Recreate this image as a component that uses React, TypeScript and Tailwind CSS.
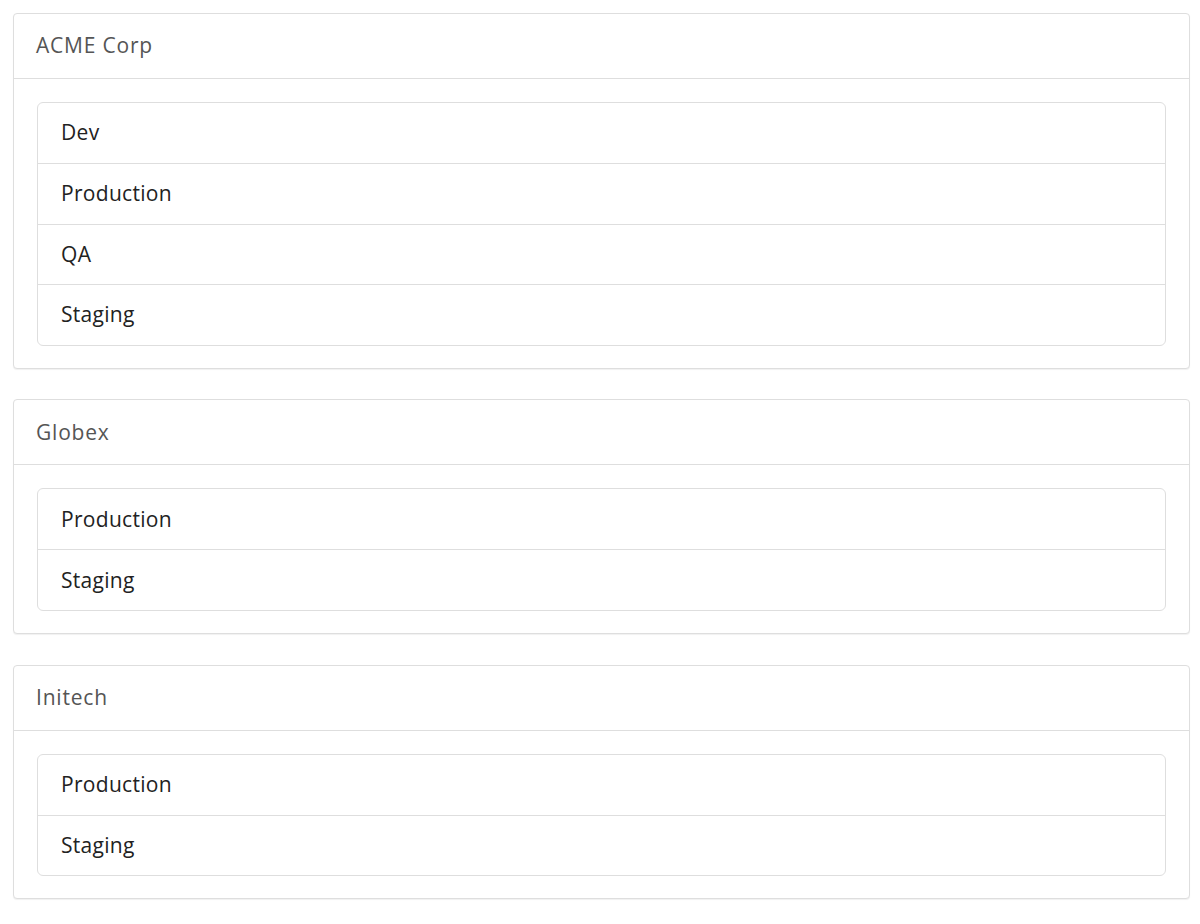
import React from 'react';

const orgs = [
    { name: 'ACME Corp', envs: ['Dev', 'Production', 'QA', 'Staging'] },
    { name: 'Globex', envs: ['Production', 'Staging'] },
    { name: 'Initech', envs: ['Production', 'Staging'] },
];

const App: React.FC = () => {
    return (
        <div className="min-h-screen bg-white pt-[13px] pl-[13px] pr-[10px]" style={{ fontFamily: '"Open Sans", Lato, sans-serif' }}>
            {orgs.map(org => (
                <div
                    key={org.name}
                    className="mb-[30.5px] rounded-[4px] border border-[#dedede] bg-white shadow-[0_1px_1px_rgba(0,0,0,0.06)]"
                >
                    <div className="h-[65px] border-b border-[#dedede] px-[22px] flex items-center text-[21px] tracking-[0.8px] text-[#555]">
                        {org.name}
                    </div>
                    <div className="p-[23px] pb-[22px]">
                        <ul className="rounded-[6px] border border-[#dedede]">
                            {org.envs.map((env, i) => (
                                <li
                                    key={env}
                                    className={
                                        'flex items-center px-[23px] text-[21px] tracking-[0.3px] text-[#222] ' +
                                        (i > 0 ? 'border-t border-[#dedede] h-[60.67px]' : 'h-[60px]')
                                    }
                                >
                                    {env}
                                </li>
                            ))}
                        </ul>
                    </div>
                </div>
            ))}
        </div>
    );
};

export default App;
